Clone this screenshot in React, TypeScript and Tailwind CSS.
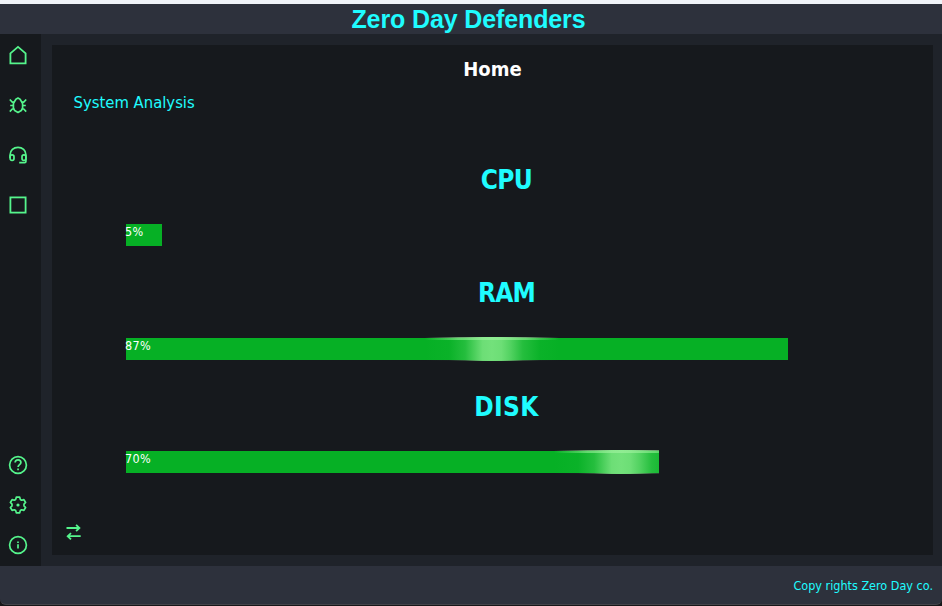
import type { ReactNode } from "react";

const SANS = "font-['DejaVu_Sans_Condensed','DejaVu_Sans',sans-serif] [font-stretch:condensed]";

function Icon({ children, className = "" }: { children: ReactNode; className?: string }) {
  return (
    <svg
      viewBox="0 0 20 20"
      width="20"
      height="20"
      fill="none"
      stroke="#55f58c"
      strokeWidth="1.8"
      className={`block shrink-0 ${className}`}
    >
      {children}
    </svg>
  );
}

const HomeIcon = () => (
  <Icon>
    <path d="M2.4 18.4V8.3L10 1.9l7.6 6.4v10.1z" />
  </Icon>
);

const BugIcon = () => (
  <Icon className="[stroke-width:1.7]">
    <path d="M10 3.1 7.9 4.2 6.5 6.6 5.4 8.6v4.2l1.3 2.8L10 17.4l3.3-1.8 1.3-2.8V8.6l-1.1-2-1.4-2.4z" strokeLinejoin="round" />
    <path d="M1.8 4.5 4.3 7.1h2M18.2 4.5l-2.5 2.6h-2M2.2 10.5h3.2M14.6 10.5h3.2M1.8 16.6 4.3 14h1.6M18.2 16.6 15.7 14h-1.6" />
  </Icon>
);

const HeadsetIcon = () => (
  <Icon className="[stroke-width:1.7]">
    <path d="M2.1 13V9.8C2.1 5.4 5.6 2.3 10 2.3s7.9 3.1 7.9 7.5v6.7q0 1.2-1.2 1.2h-5.5" />
    <rect x="2.1" y="9.9" width="3.9" height="5.6" rx="1.9" />
    <rect x="14" y="9.9" width="3.9" height="5.6" rx="1.9" />
  </Icon>
);

const SquareIcon = () => (
  <Icon>
    <rect x="2.4" y="2.4" width="15.2" height="15.2" />
  </Icon>
);

const HelpIcon = () => (
  <Icon className="[stroke-width:1.7]">
    <circle cx="10" cy="10" r="8.4" />
    <path d="M7.1 7.5c.1-1.8 1.2-2.7 2.9-2.7s2.9 1.1 2.9 2.7c0 2.2-2.8 2.2-2.8 4.6" />
    <path d="M9.2 14.3h1.7" />
  </Icon>
);

const GearIcon = () => (
  <Icon className="[stroke-width:1.7]">
    <path
      strokeLinejoin="round"
      d="M8.3 2.2h3.4l.6 2.2 1.4.8 2.2-.6 1.7 2.9-1.6 1.6v1.8l1.6 1.6-1.7 2.9-2.2-.6-1.4.8-.6 2.2H8.3l-.6-2.2-1.4-.8-2.2.6-1.7-2.9L4 10.9V9.1L2.4 7.5l1.7-2.9 2.2.6 1.4-.8z"
    />
    <circle cx="10" cy="10" r="1.6" fill="#55f58c" stroke="none" />
  </Icon>
);

const InfoIcon = () => (
  <Icon className="[stroke-width:1.7]">
    <circle cx="10" cy="10" r="8.4" />
    <path d="M10 9.2v4.3M10 6.5v1.5" />
  </Icon>
);

const SwapIcon = () => (
  <Icon>
    <path d="M2.5 6h13M12.1 2.9 15.4 6l-3.3 3.1M16.7 14.2h-13M7 11.1l-3.3 3.1L7 17.3" />
  </Icon>
);

type Meter = { label: string; tracking: string; height: string; value: string; width: number; glow?: number };

const meters: Meter[] = [
  { label: "CPU", tracking: "tracking-[-0.6px]", height: "h-[113px]", value: "5%", width: 36 },
  { label: "RAM", tracking: "tracking-[-0.8px]", height: "h-[114px] [&>div]:mt-[29px]", value: "87%", width: 662, glow: 299 },
  { label: "DISK", tracking: "tracking-[0.3px]", height: "h-[113px]", value: "70%", width: 532.5, glow: 428 },
];

function MeterRow({ label, tracking, height, value, width, glow }: Meter) {
  return (
    <section className={height}>
      <h2 className={`h-8 text-center text-[26px] leading-8 font-bold text-[#1ffcff] ${tracking}`}>{label}</h2>
      <div className="relative mt-7 h-[22px] bg-[#06b025]" style={{ width }}>
        {glow !== undefined && (
          <div className="absolute -top-px left-0 h-6 w-full overflow-hidden">
            <div
              className="absolute top-0 h-6 w-[134px] bg-[linear-gradient(to_right,#73e17b00_0%,#73e17b0a_18%,#73e17b48_30%,#73e17bb0_38%,#73e17bf0_43%,#73e17b_50%,#73e17bf0_57%,#73e17bb0_64%,#73e17b48_73%,#73e17b0a_86%,#73e17b00_100%)]"
              style={{ left: glow }}
            >
              <div className="h-[3px] bg-[linear-gradient(to_right,#9df29d00,#9df29d90_25%,#9df29db0_50%,#9df29d90_75%,#9df29d00)]" />
            </div>
          </div>
        )}
        <span className="relative -left-px block text-[12.5px] leading-4 tracking-[0.3px] text-white">{value}</span>
      </div>
    </section>
  );
}

export default function App() {
  return (
    <div className={`flex h-[606px] w-[942px] flex-col overflow-hidden bg-[#171719] ${SANS}`}>
      <div className="h-1 shrink-0 bg-[#f0f3f8]" />
      <header className="flex h-[30px] shrink-0 items-center justify-center bg-[#2d313c] pr-[5px]">
        <h1 className="font-['Liberation_Sans',Arial,sans-serif] text-[25px] leading-[30px] font-bold tracking-[-0.12px] whitespace-nowrap text-[#1ffcff]">
          Zero Day Defenders
        </h1>
      </header>
      <div className="flex h-[532px] shrink-0 bg-[#1f232a]">
        <nav className="flex w-[41px] shrink-0 flex-col justify-between bg-[#16191d] pt-[11px] pr-[5px] pb-[11px]">
          <div className="flex flex-col items-center gap-[30px]">
            <HomeIcon />
            <BugIcon />
            <HeadsetIcon />
            <SquareIcon />
          </div>
          <div className="flex flex-col items-center gap-5">
            <HelpIcon />
            <GearIcon />
            <InfoIcon />
          </div>
        </nav>
        <main className="mt-[11px] ml-[11px] flex h-[510px] w-[881px] flex-col bg-[#16191d]">
          <h2 className="mt-2.5 h-7 text-center text-[20px] leading-7 font-bold text-white">Home</h2>
          <p className="mt-2 ml-[21.5px] h-6 text-[16.5px] leading-6 text-[#1ffcff]">System Analysis</p>
          <div className="mt-[49px] ml-[74px] w-[761px]">
            {meters.map((m) => (
              <MeterRow key={m.label} {...m} />
            ))}
          </div>
          <div className="mt-[18px] ml-3">
            <SwapIcon />
          </div>
        </main>
      </div>
      <footer className="flex h-[39px] shrink-0 items-center justify-end rounded-b-md border-b border-[#44444a] bg-[#2d313c] pr-[9px] text-[12.5px] text-[#1ffcff]">
        <span className="pt-[3px]">Copy rights Zero Day co.</span>
      </footer>
    </div>
  );
}
